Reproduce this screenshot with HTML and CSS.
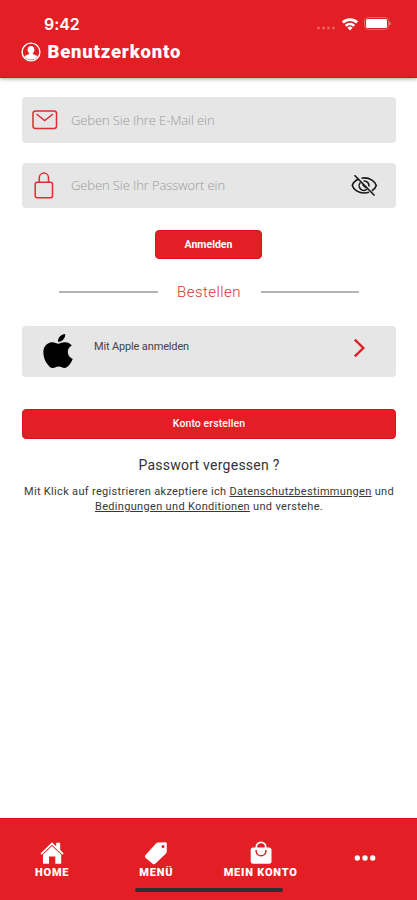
FILE: index.html
```html
<!DOCTYPE html>
<html lang="de">
<head>
    <meta charset="UTF-8">
    <meta name="viewport" content="width=device-width, initial-scale=1.0">
    <title>Benutzerkonto</title>
    <link rel="stylesheet" href="styles.css">
</head>
<body>
    <header>
        <div class="status-bar">
            <span class="time">9:42</span>
            <div class="status-icons">
                <svg class="signal" width="20" height="4" viewBox="0 0 20 4" fill="#ee6165">
                    <circle cx="2.5" cy="2" r="1.5"/><circle cx="7.5" cy="2" r="1.5"/><circle cx="12.5" cy="2" r="1.5"/><circle cx="17.5" cy="2" r="1.5"/>
                </svg>
                <svg class="wifi" width="18" height="14" viewBox="0 0 18 14" fill="none" stroke="#fff" stroke-width="2.8">
                    <path d="M1.8 5.5a10.4 10.4 0 0 1 14.4 0"/>
                    <path d="M4.7 8.8a6.2 6.2 0 0 1 8.6 0" stroke-width="2.4"/>
                    <path d="M9 13.6L6.4 10.8a3.7 3.7 0 0 1 5.2 0z" fill="#fff" stroke="none"/>
                </svg>
                <svg class="battery" width="27" height="13" viewBox="0 0 27 13">
                    <rect x=".5" y=".5" width="24" height="12" rx="3.5" fill="none" stroke="#ee6165"/>
                    <rect x="2" y="2" width="21" height="9" rx="1.5" fill="#fff"/>
                    <path d="M25.4 4.5c1.6.8 1.6 3.2 0 4z" fill="#f5a3a4"/>
                </svg>
            </div>
        </div>
        <div class="title">
            <svg width="20" height="20" viewBox="0 0 20 20">
                <circle cx="10" cy="10" r="8.9" fill="none" stroke="#fff" stroke-width="1.4"/>
                <path d="M10 4.1c2 0 3.4 1.5 3.4 3.6 0 1.4-.6 2.7-1.5 3.4v1l3.4 1.5c.7.3 1 .8 1.1 1.4a8.9 8.9 0 0 1-12.8 0c.1-.6.4-1.1 1.1-1.4l3.4-1.5v-1c-.9-.7-1.5-2-1.5-3.4 0-2.1 1.4-3.6 3.4-3.6z" fill="#fff"/>
            </svg>
            <h1>Benutzerkonto</h1>
        </div>
    </header>

    <main>
        <form>
            <div class="field">
                <svg class="mail" width="26" height="20" viewBox="0 0 26 20" fill="none" stroke="#dc2d33" stroke-width="1.5">
                    <rect x="1" y="1" width="23.5" height="17.5" rx="2.5"/>
                    <path d="M4.5 4l8.2 6.5L21 4"/>
                </svg>
                <input class="email" type="text" placeholder="Geben Sie Ihre E-Mail ein">
            </div>
            <div class="field password">
                <svg class="lock" width="20" height="27" viewBox="0 0 20 27" fill="none" stroke="#dc2d33" stroke-width="1.5">
                    <rect x="1.2" y="10.3" width="17.3" height="15.5" rx="2"/>
                    <path d="M5.3 10V5.7a4.6 4.6 0 0 1 9.2 0V10"/>
                </svg>
                <input type="text" placeholder="Geben Sie Ihr Passwort ein">
                <svg class="eye" width="27" height="23" viewBox="0 0 27 23" fill="none" stroke="#171717" stroke-width="1.6">
                    <path d="M7.8 5C4.4 6.4 2 8.8 1.3 11.5c1.3 4.4 6.2 7.5 12 7.5 1.7 0 3.3-.3 4.7-.7"/>
                    <path d="M10.5 4.2c.9-.2 1.8-.3 2.8-.3 5.8 0 10.7 3.2 12 7.6-.6 2-2.2 3.9-4.4 5.2"/>
                    <path d="M9.5 8.5a4.6 4.6 0 0 0 6.6 6.5M12.6 7a4.7 4.7 0 0 1 5.3 5.5M11.5 10.5l3.3 3.3"/>
                    <path d="M3.5 1.2l20 20.3"/>
                </svg>
            </div>
            <button class="login" type="button">Anmelden</button>
        </form>

        <div class="divider"><span>Bestellen</span></div>

        <a class="apple-login">
            <svg class="apple" width="30" height="34" viewBox="2 0 20 24" preserveAspectRatio="none" fill="#000">
                <path d="M12.152 6.896c-.948 0-2.415-1.078-3.96-1.04-2.04.027-3.91 1.183-4.961 3.014-2.117 3.675-.546 9.103 1.519 12.09 1.013 1.454 2.208 3.09 3.792 3.039 1.52-.065 2.09-.987 3.935-.987 1.831 0 2.35.987 3.96.948 1.637-.026 2.676-1.48 3.676-2.948 1.156-1.688 1.636-3.325 1.662-3.415-.039-.013-3.182-1.221-3.22-4.857-.026-3.04 2.48-4.494 2.597-4.559-1.429-2.09-3.623-2.324-4.39-2.376-2-.156-3.675 1.09-4.61 1.09z"/>
                <path d="M15.53 3.83c.843-1.012 1.4-2.427 1.245-3.83-1.207.052-2.662.805-3.532 1.818-.78.896-1.454 2.338-1.273 3.714 1.338.104 2.715-.688 3.559-1.701z"/>
            </svg>
            <span>Mit Apple anmelden</span>
            <svg class="chevron" width="13" height="20" viewBox="0 0 13 20" fill="none" stroke="#dc1f26" stroke-width="2.4">
                <path d="M1.8 1.7L10.3 10l-8.5 8.3"/>
            </svg>
        </a>

        <button class="register" type="button">Konto erstellen</button>
        <p class="forgot">Passwort vergessen ?</p>
        <p class="terms">
            Mit Klick auf registrieren akzeptiere ich <u>Datenschutzbestimmungen</u> und<br>
            <u>Bedingungen und Konditionen</u> und verstehe.
        </p>
    </main>

    <nav>
        <a class="tab">
            <svg width="24" height="24" viewBox="0 0 24 24" fill="#fff">
                <path d="M12 1.2l4.2 4.1V1.7h4v7.2l3.5 3.5-1.3 1.3L12 3.8 1.8 13.7.5 12.4z"/>
                <path d="M12 5l9.2 8.7v9.1h-5.9v-7.2H9v7.2H3v-9.1z"/>
            </svg>
            <span>HOME</span>
        </a>
        <a class="tab">
            <svg width="24" height="24" viewBox="0 0 24 24">
                <path d="M13.8 1.6l7.5-.3c1 0 1.5.5 1.5 1.5v7.8c0 .8-.3 1.4-.8 1.9L11.5 22.6c-.9.9-2 .9-2.9.1L1.7 17c-1-.8-1-2-.2-2.9L12 2.5c.5-.6 1.1-.9 1.8-.9z" fill="#fff"/>
                <circle cx="19" cy="5.6" r="1.5" fill="#e31e24"/>
            </svg>
            <span>MENÜ</span>
        </a>
        <a class="tab">
            <svg width="24" height="24" viewBox="0 0 24 24" fill="none">
                <rect x="1.7" y="6.5" width="20.8" height="16.3" rx="2.5" fill="#fff"/>
                <path d="M7.3 8V6a4.7 4.7 0 0 1 9.4 0v2" stroke="#fff" stroke-width="1.7"/>
                <path d="M7.2 10.5a4.9 4.9 0 0 0 9.7 0" stroke="#e31e24" stroke-width="1.4"/>
                <circle cx="7.2" cy="10" r="1" fill="#e31e24"/><circle cx="16.9" cy="10" r="1" fill="#e31e24"/>
            </svg>
            <span>MEIN KONTO</span>
        </a>
        <a class="tab more">
            <svg width="22" height="6" viewBox="0 0 22 6" fill="#fff">
                <circle cx="3.3" cy="3" r="2.7"/><circle cx="11" cy="3" r="2.7"/><circle cx="18.7" cy="3" r="2.7"/>
            </svg>
        </a>
        <div class="home-indicator"></div>
    </nav>
</body>
</html>
```

FILE: styles.css
```css
* {
    box-sizing: border-box;
}
body {
    margin: 0;
    height: 900px;
    display: flex;
    flex-direction: column;
    background-color: #fff;
    font-family: Roboto, sans-serif;
    overflow: hidden;
}
svg {
    display: block;
    flex: none;
}
header {
    height: 78px;
    background-color: #e31e24;
    color: #fff;
    border-bottom: 1px solid #d51318;
    box-shadow: 0 1px 4px rgba(0, 0, 0, 0.35);
}
.status-bar {
    display: flex;
    justify-content: space-between;
    height: 41px;
    padding: 14px 26px 0 44px;
}
.time {
    font: 600 16px/20px Inter, sans-serif;
    letter-spacing: -0.1px;
}
.status-icons {
    display: flex;
    align-items: flex-start;
    padding-top: 3px;
}
.signal {
    margin: 9px 5px 0 0;
}
.wifi {
    margin-right: 5px;
}
.title {
    display: flex;
    align-items: center;
    height: 21px;
    padding-left: 21px;
}
.title h1 {
    margin: 2px 0 0 6.5px;
    font-size: 18.5px;
    font-weight: 900;
    line-height: 21px;
    letter-spacing: 0.8px;
}

/* Formular */
main {
    flex: 1;
    padding: 19px 21px 0 22px;
}
.field {
    display: flex;
    align-items: center;
    height: 46px;
    padding: 0 18px 0 10px;
    background-color: #e6e6e6;
    border-radius: 4px;
}
.password {
    height: 45px;
    margin-top: 20px;
    padding-left: 12px;
}
.field input {
    flex: 1;
    min-width: 0;
    margin-left: 13px;
    padding: 0;
    border: none;
    outline: none;
    background: none;
    font: 300 13px "Open Sans", sans-serif;
    letter-spacing: -0.1px;
}
.password input {
    margin-left: 17px;
    padding-bottom: 1px;
}
.field input::placeholder {
    color: #999;
    opacity: 1;
}
button {
    display: block;
    padding: 0;
    border: 1px solid #d9151b;
    border-radius: 4px;
    background-color: #e31e24;
    color: #fff;
    font-family: Roboto, sans-serif;
}
.login {
    width: 107px;
    height: 29px;
    margin: 22px auto 0 133px;
    font-size: 10.5px;
    font-weight: 700;
}
.divider {
    display: flex;
    align-items: center;
    justify-content: center;
    height: 22px;
    margin: 22px 37px 0;
    color: #dc3035;
    font-size: 15px;
}
.divider::before,
.divider::after {
    content: "";
    flex: 1;
    height: 2px;
    background-color: #b5b5b5;
}
.divider span {
    width: 103px;
    text-align: center;
    font-weight: 300;
    letter-spacing: 0.45px;
}
.apple-login {
    display: flex;
    height: 51px;
    margin-top: 23px;
    padding: 8px 30px 0 21px;
    background-color: #e6e6e6;
    border-radius: 4px;
}
.apple-login span {
    margin-left: 21px;
    padding-top: 5px;
    color: #444;
    font-size: 11px;
    line-height: 15px;
    letter-spacing: -0.15px;
}
.chevron {
    margin: 4px 0 0 auto;
}
.register {
    width: 100%;
    height: 30px;
    margin-top: 32px;
    padding-bottom: 2px;
    font-size: 10.5px;
    font-weight: 500;
    letter-spacing: 0.1px;
}
.forgot {
    margin: 16px 0 0;
    color: #333;
    font-size: 14px;
    line-height: 20px;
    text-align: center;
    letter-spacing: 0.25px;
}
.terms {
    margin: 9px -10px 0;
    color: #383838;
    font-size: 11px;
    line-height: 15px;
    text-align: center;
    letter-spacing: 0.32px;
    white-space: nowrap;
}

/* Navigation unten */
nav {
    position: relative;
    display: grid;
    grid-template-columns: repeat(4, 1fr);
    height: 82px;
    padding-top: 22px;
    background-color: #e31e24;
    border-top: 1px solid #d51318;
    color: #fff;
}
.tab {
    display: flex;
    flex-direction: column;
    align-items: center;
}
.tab span {
    margin-top: 1px;
    font-size: 11px;
    font-weight: 900;
    line-height: 13px;
    letter-spacing: 0.8px;
    white-space: nowrap;
}
.more {
    padding-top: 14px;
}
.home-indicator {
    position: absolute;
    left: 135px;
    bottom: 8px;
    width: 148px;
    height: 4px;
    border-radius: 2px;
    background-color: #2b3033;
}
```
